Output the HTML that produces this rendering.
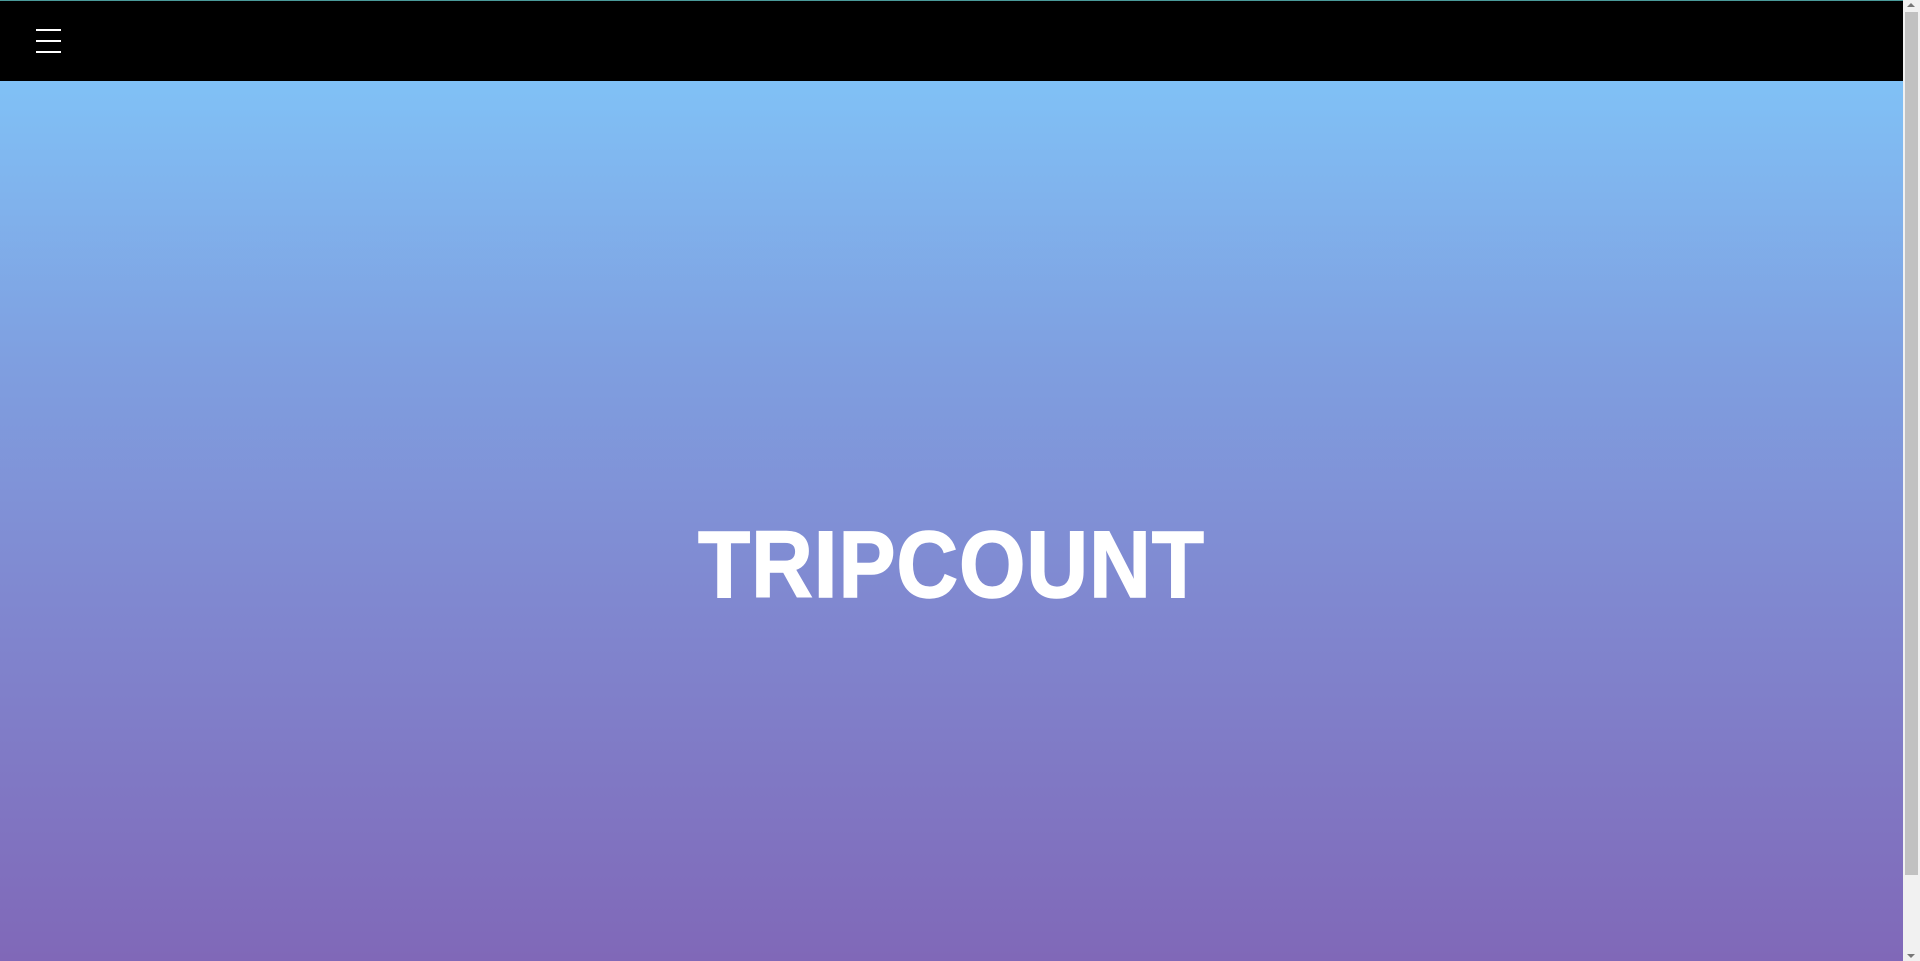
<!DOCTYPE html>
<html><head><meta charset="utf-8"><style>
html,body{margin:0;padding:0;width:1920px;height:961px;overflow:hidden;font-family:"Liberation Sans",sans-serif}
.main{position:absolute;left:0;top:0;width:1903px;height:961px;background:linear-gradient(#80c1f6 81px,#7f9fe0 360px,#8088d0 600px,#8068b8 961px)}
.hdr{position:absolute;left:0;top:0;width:1903px;height:81px;background:#000;border-top:1px solid #4a9a9a;box-sizing:border-box}
.hb{position:absolute;left:36px;width:25px;height:2px;background:#fff}
.title{position:absolute;left:0;width:1903px;top:518px;text-align:center;color:#fff;font-weight:bold;font-size:95px;line-height:95px;letter-spacing:1px;transform:scaleX(0.9);transform-origin:951px 0;-webkit-text-stroke:1.5px #fff}
.sb{position:absolute;right:0;top:0;width:17px;height:961px;background:#f1f1f1}
.th{position:absolute;left:2px;width:13px;top:12px;height:863px;background:#c1c1c1}
</style></head><body>
<div class="main">
<div class="title">TRIPCOUNT</div>
</div>
<div class="hdr">
<div class="hb" style="top:28px"></div>
<div class="hb" style="top:39px"></div>
<div class="hb" style="top:50px"></div>
</div>
<div class="sb"><div class="th"></div>
<div style="position:absolute;left:4px;top:3px;border:4px solid transparent;border-bottom:4px solid #777;border-top:0"></div>
<div style="position:absolute;left:4px;bottom:3px;border:4px solid transparent;border-top:4px solid #777;border-bottom:0"></div>
</div>
</body></html>
